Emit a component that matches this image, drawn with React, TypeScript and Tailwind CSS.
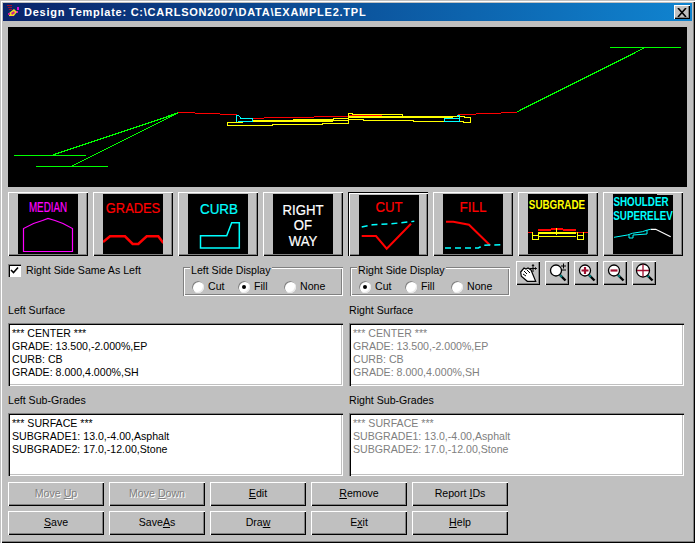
import type { ReactNode } from "react";

const RAISED = "shadow-[inset_1px_1px_0_#fff,inset_-1px_-1px_0_#000,inset_-2px_-2px_0_#808080]";
const SUNKEN = "shadow-[inset_1px_1px_0_#808080,inset_2px_2px_0_#000,inset_-1px_-1px_0_#fff,inset_-2px_-2px_0_#c0c0c0]";

function Underlined({ text, at }: { text: string; at: number }) {
  return (
    <>
      {text.slice(0, at)}
      <span className="underline">{text[at]}</span>
      {text.slice(at + 1)}
    </>
  );
}

function ImageButton({ children, selected }: { children: ReactNode; selected?: boolean }) {
  return (
    <div
      className={
        selected
          ? "flex h-16 w-20 items-center justify-center pt-[1px] pl-[1px] shadow-[inset_1px_1px_0_#000,inset_2px_2px_0_#fff,inset_-1px_-1px_0_#000,inset_-2px_-2px_0_#808080]"
          : `flex h-16 w-20 items-center justify-center ${RAISED}`
      }
    >
      <svg width="60" height="60" viewBox="0 0 60 60" className="bg-black font-['Liberation_Sans',sans-serif]">
        {children}
      </svg>
    </div>
  );
}

// squeezed caption inside an image button, the originals are bitmaps with narrow letters
function Caption({ x, y, sx, size, fill, bold, children }: { x: number; y: number; sx: number; size: number; fill: string; bold?: boolean; children: string }) {
  return (
    <text
      transform={`translate(${x} ${y}) scale(${sx} 1)`}
      textAnchor="middle"
      fill={fill}
      stroke={bold ? "none" : fill}
      strokeWidth={bold ? 0 : 0.2}
      fontSize={size}
      fontWeight={bold ? 700 : 400}
    >
      {children}
    </text>
  );
}

function Radio({ label, checked, width }: { label: string; checked?: boolean; width: string }) {
  return (
    <div className={`flex items-center gap-[4px] ${width}`}>
      <span className="flex h-[12px] w-[12px] items-center justify-center rounded-full bg-white shadow-[inset_1px_1px_0_#808080,inset_-1px_-1px_0_#e8e8e8,0_0_0_1px_#c0c0c0]">
        {checked && <span className="h-[4px] w-[4px] rounded-full bg-black" />}
      </span>
      <span>{label}</span>
    </div>
  );
}

function SideDisplay({ title, selected }: { title: string; selected: string }) {
  return (
    <div className="relative flex h-[29px] w-[160px] items-end pb-[1px] pl-[9px] shadow-[inset_1px_1px_0_#808080,inset_2px_2px_0_#fff,inset_-1px_-1px_0_#fff,inset_-2px_-2px_0_#808080]">
      <span className="absolute top-[-4px] left-[7px] bg-[#c0c0c0] px-[1px] leading-[14px]">{title}</span>
      <Radio label="Cut" width="w-[46px]" checked={selected === "Cut"} />
      <Radio label="Fill" width="w-[46px]" checked={selected === "Fill"} />
      <Radio label="None" width="w-[46px]" checked={selected === "None"} />
    </div>
  );
}

function ToolButton({ children }: { children: ReactNode }) {
  return (
    <div className={`flex h-[24px] w-[24px] items-center justify-center ${RAISED}`}>
      <svg width="20" height="20" viewBox="0 0 20 20" fill="none">
        {children}
      </svg>
    </div>
  );
}

function Lens({ children, r = 5.5 }: { children?: ReactNode; r?: number }) {
  return (
    <>
      <path d="M13 12l5.500 5.500" stroke="#000" strokeWidth="2.400" />
      <path d="M13 12l2 2" stroke="#008080" strokeWidth="2" />
      <circle cx="9" cy="7.500" r={r} fill="#fff" stroke="#000" strokeWidth="1.300" />
      {children}
    </>
  );
}

function ListBox({ lines, disabled }: { lines: string[]; disabled?: boolean }) {
  return (
    <div className={`h-[63px] bg-white pt-[4px] pl-[4px] leading-[13px] ${SUNKEN} ${disabled ? "text-[#808080]" : "text-black"}`}>
      {lines.map((line) => (
        <div key={line}>{line}</div>
      ))}
    </div>
  );
}

function PushButton({ text, at, disabled }: { text: string; at: number; disabled?: boolean }) {
  return (
    <div
      className={`flex h-[24px] w-[96px] items-center justify-center ${RAISED} ${
        disabled ? "text-[#808080] [text-shadow:1px_1px_0_#fff]" : "text-black"
      }`}
    >
      <span>
        <Underlined text={text} at={at} />
      </span>
    </div>
  );
}

const surface = ["*** CENTER ***", "GRADE: 13.500,-2.000%,EP", "CURB: CB", "GRADE: 8.000,4.000%,SH"];
const subGrades = ["*** SURFACE ***", "SUBGRADE1: 13.0,-4.00,Asphalt", "SUBGRADE2: 17.0,-12.00,Stone"];

export default function App() {
  return (
    <div className="flex h-[543px] w-[695px] flex-col overflow-hidden bg-[#c0c0c0] p-[3px] font-['Liberation_Sans',sans-serif] text-[10.6px] text-black shadow-[inset_1px_1px_0_#c0c0c0,inset_2px_2px_0_#fff,inset_-1px_-1px_0_#000,inset_-2px_-2px_0_#808080]">
      {/* title bar */}
      <div className="flex h-[18px] shrink-0 items-center bg-gradient-to-r from-[#0a246a] to-[#1084d0] pr-[2px] pl-[2px]">
        <svg width="16" height="16" viewBox="0 0 16 16" className="shrink-0">
          <path d="M2 1h5v1H2zM3 3h4v1H3zM4 5h3v1H4z" fill="#a01030" />
          <path d="M12 3h2v3h-2zM11 7h2v2h-2z" fill="#e010d0" />
          <path d="M4 9l5-4 3 3-4 5-4-1z" fill="#f0e020" />
          <path d="M6 9l3-2 1 2-3 2zM3 9h2v2H3z" fill="#d02090" />
          <path d="M5 12h4v1H5z" fill="#301080" />
        </svg>
        <span className="ml-[3px] text-[11px] font-bold tracking-[0.75px] whitespace-nowrap text-white">
          Design Template: C:\CARLSON2007\DATA\EXAMPLE2.TPL
        </span>
        <div className={`ml-auto flex h-[14px] w-[16px] items-center justify-center bg-[#c0c0c0] ${RAISED}`}>
          <svg width="10" height="9" viewBox="0 0 10 9">
            <path d="M1 0l8 9M9 0l-8 9" stroke="#000" strokeWidth="1.600" />
          </svg>
        </div>
      </div>

      <div className="flex flex-col px-[5px]">
        {/* template preview */}
        <svg width="679" height="160" viewBox="0 0 679 160" className="mt-[6px] shrink-0 bg-black" shapeRendering="crispEdges" fill="none">
          <g transform="translate(-8 -27)">
            <path d="M14 155.500h72M36 166.500h72M610 47.500h71" stroke="#00ff00" />
            <path d="M53 155L178 113M72 166L178 113M517 112L644 48" stroke="#00ff00" strokeWidth="1.300" />
            <path d="M178 112.500h17M195 113.500h25M220 114.500h17M252 118.500h12M264 117.500h50M314 116.500h34M348 115.500h34M382 116.500h50M432 117.500h14M458 114.500h18M476 113.500h25M501 112.500h16" stroke="#ff0000" />
            <path d="M252 121h81M348 117h65M413 116.500h40" stroke="#ffff00" strokeWidth="2" />
            <path d="M227 122.500h16M227 122.500v3h45v-1h50v-1h26v-10h4v1h50v2h11M283 120.500h10v-1h40v-1h15M348 119.500h15v1h50v1h50v1h7v-5h-6v-1h-12M333 120.500h15" stroke="#ffff00" />
            <path d="M236.500 122v-7h2l2 3h12v3h-15M444.500 118.500h15v3h-15zM457.500 117v-2h2v4" stroke="#00ffff" />
          </g>
        </svg>

        {/* element buttons */}
        <div className="mt-[5px] flex gap-[5px]">
          <ImageButton>
            <Caption x={30} y={18} sx={0.7} size={14} fill="#ff00ff">MEDIAN</Caption>
            <path d="M5.500 57.500V34.500l10-5 9-3 5.500-2 7 2 8 3 9.500 5v23z" stroke="#ff00ff" fill="none" strokeWidth="1.200" />
          </ImageButton>
          <ImageButton>
            <Caption x={30} y={19} sx={0.92} size={14} fill="#ff0000">GRADES</Caption>
            <path d="M0 48l7-5.700h15l7.700 7.700h5.600l8.400-7.700h11.600l5 6.700" stroke="#ff0000" fill="none" strokeWidth="2.500" />
          </ImageButton>
          <ImageButton>
            <Caption x={31} y={20} sx={0.96} size={14} fill="#00ffff">CURB</Caption>
            <path d="M12.500 41.700h26.200l5-13h7.600V54H12.500z" stroke="#00ffff" fill="none" strokeWidth="1.500" />
          </ImageButton>
          <ImageButton>
            <Caption x={30} y={20.500} sx={0.88} size={15} fill="#fff">RIGHT</Caption>
            <Caption x={30} y={36} sx={0.88} size={15} fill="#fff">OF</Caption>
            <Caption x={30} y={52} sx={0.88} size={15} fill="#fff">WAY</Caption>
          </ImageButton>
          <ImageButton selected>
            <Caption x={30} y={17} sx={0.88} size={15} fill="#ff0000">CUT</Caption>
            <path d="M2.700 32l11-2.300 16.600-.7 25-2.700" stroke="#00ffff" fill="none" strokeWidth="1.500" strokeDasharray="6 4" />
            <path d="M2.700 41H17l10.700 12.700L52 28.700" stroke="#ff0000" fill="none" strokeWidth="2" />
          </ImageButton>
          <ImageButton>
            <Caption x={30} y={18} sx={0.9} size={15} fill="#ff0000">FILL</Caption>
            <path d="M3 27.700h7.300l15.700 3L47 51.300" stroke="#ff0000" fill="none" strokeWidth="2" />
            <path d="M2 54h33.300l5-2.700 18.400-.6" stroke="#00ffff" fill="none" strokeWidth="1.500" strokeDasharray="6 4" />
          </ImageButton>
          <ImageButton>
            <Caption x={29} y={14.500} sx={0.82} size={12} fill="#ffff00" bold>SUBGRADE</Caption>
            <g shapeRendering="crispEdges" fill="none">
              <path d="M0 38.500h4M48 38.500h12" stroke="#ff0000" />
              <path d="M10 35.500h13M35 35.500h13M23 34.500h12" stroke="#ff0000" strokeWidth="2" />
              <path d="M10 38.500h38" stroke="#ffff00" strokeWidth="2" />
              <path d="M4.500 38v7h6v-7M4.500 41.500h6M49.500 38v7h6v-7M49.500 41.500h6M10 42.500h38M28.500 34v7" stroke="#ffff00" />
            </g>
          </ImageButton>
          <ImageButton>
            <rect x="44" y="0" width="16" height="1" fill="#c0c0c0" />
            <Caption x={28} y={11.500} sx={0.82} size={12} fill="#00ffff" bold>SHOULDER</Caption>
            <Caption x={30} y={25.500} sx={0.82} size={12} fill="#00ffff" bold>SUPERELEV</Caption>
            <path d="M1 43.300L14.400 41l5-1.700 10-1.600 5-1.700 3.300-.7" stroke="#00ffff" fill="none" />
            <path d="M16 41v3h4v-3l14-1v-4" stroke="#00ffff" fill="none" />
            <path d="M37.700 35.300h5l15 7.400" stroke="#fff" fill="none" strokeWidth="1.200" />
          </ImageButton>
        </div>

        {/* display options */}
        <div className="mt-[5px] flex items-start">
          <div className="mt-[2px] flex w-[175px] items-center gap-[5px]">
            <span className="flex h-[13px] w-[13px] items-center justify-center bg-white shadow-[inset_1px_1px_0_#808080,inset_2px_2px_0_#000,inset_-1px_-1px_0_#fff]">
              <svg width="9" height="9" viewBox="0 0 9 9">
                <path d="M1 4l2.500 2.500L8 1.500" stroke="#000" strokeWidth="1.600" fill="none" />
              </svg>
            </span>
            <span>Right Side Same As Left</span>
          </div>
          <div className="mt-[6px] flex gap-[7px]">
            <SideDisplay title="Left Side Display" selected="Fill" />
            <SideDisplay title="Right Side Display" selected="Cut" />
          </div>
          <div className="ml-[6px] flex gap-[5px]">
            <ToolButton>
              <path d="M2.700 9L6 5l2 1 2-1 3 2 4.700 11.300H9.300L3.300 13.300z" fill="#fff" stroke="#000" strokeWidth="1.200" />
              <path d="M6 8l3 3M9 7l3 3M5 11l3 2" stroke="#000" />
              <path d="M15 2v7M11.500 5.500h7M14 3l1-1.500L16 3M17 4.500l1.500 1-1.500 1" stroke="#000" />
            </ToolButton>
            <ToolButton>
              <Lens />
              <path d="M14 3h5M16.500 0.500v5M14 7h5" stroke="#000" />
            </ToolButton>
            <ToolButton>
              <Lens>
                <path d="M5.500 7.500h7M9 4v7" stroke="#a01030" strokeWidth="2.200" />
              </Lens>
            </ToolButton>
            <ToolButton>
              <Lens>
                <path d="M5.500 7.500h7" stroke="#a01030" strokeWidth="2.200" />
              </Lens>
            </ToolButton>
            <ToolButton>
              <Lens r={6.500}>
                <path d="M9 1.500v12M3 7.500h12" stroke="#a01030" strokeWidth="1.300" />
              </Lens>
            </ToolButton>
          </div>
        </div>

        {/* surfaces */}
        <div className="mt-[-1px] grid grid-cols-[335px_335px] gap-x-[6px]">
          <div className="flex flex-col">
            <span className="mt-[8px] mb-[6px] leading-[14px]">Left Surface</span>
            <ListBox lines={surface} />
            <span className="mt-[7px] mb-[6px] leading-[14px]">Left Sub-Grades</span>
            <ListBox lines={subGrades} />
          </div>
          <div className="flex flex-col">
            <span className="mt-[8px] mb-[6px] leading-[14px]">Right Surface</span>
            <ListBox lines={surface} disabled />
            <span className="mt-[7px] mb-[6px] leading-[14px]">Right Sub-Grades</span>
            <ListBox lines={subGrades} disabled />
          </div>
        </div>

        {/* commands */}
        <div className="mt-[6px] grid w-[500px] grid-cols-5 gap-x-[5px] gap-y-[5px]">
          <PushButton text="Move Up" at={5} disabled />
          <PushButton text="Move Down" at={5} disabled />
          <PushButton text="Edit" at={0} />
          <PushButton text="Remove" at={0} />
          <PushButton text="Report IDs" at={7} />
          <PushButton text="Save" at={0} />
          <PushButton text="SaveAs" at={4} />
          <PushButton text="Draw" at={3} />
          <PushButton text="Exit" at={1} />
          <PushButton text="Help" at={0} />
        </div>
      </div>
    </div>
  );
}
